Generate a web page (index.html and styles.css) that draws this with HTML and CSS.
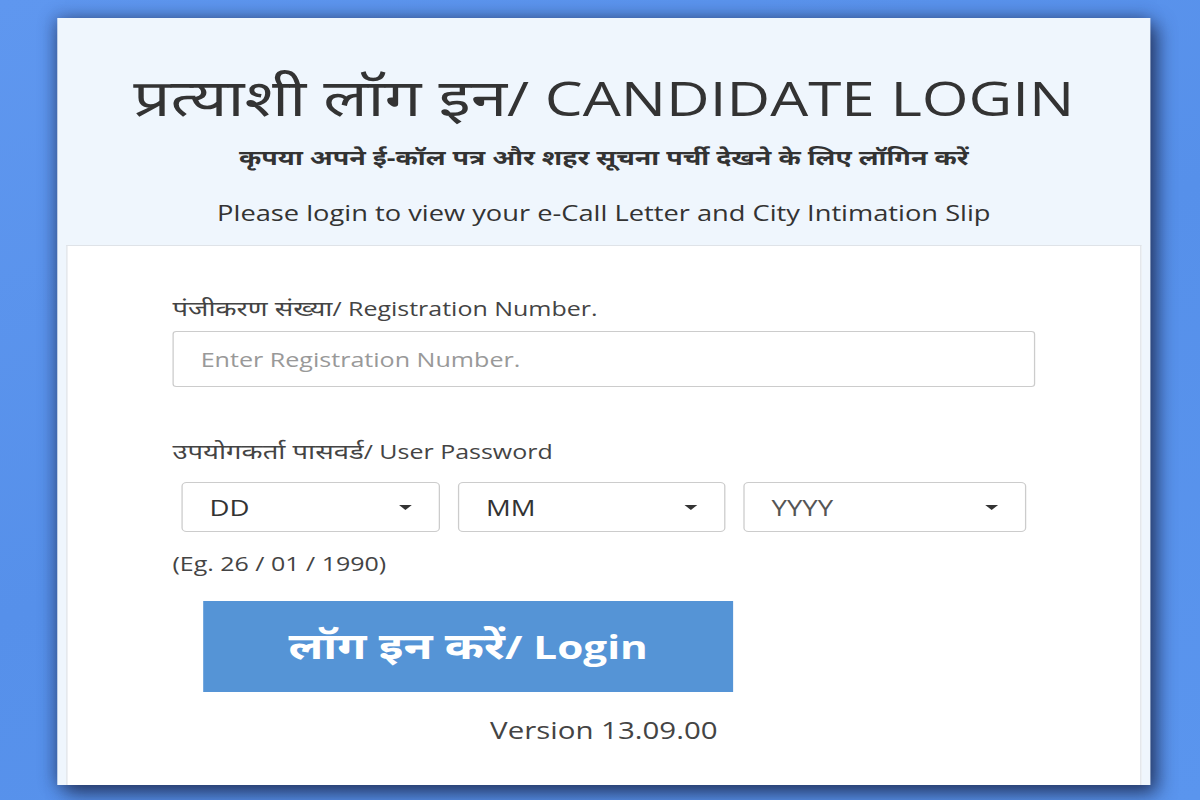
FILE: index.html
```html
<!DOCTYPE html>
<html lang="hi">
<head>
<meta charset="utf-8">
<title>Candidate Login</title>
<link rel="stylesheet" href="styles.css">
</head>
<body>
<div class="stage">
  <div class="card">
    <div class="header">
      <h1 class="title"><span class="hi">प्रत्याशी लॉग इन</span>/ CANDIDATE LOGIN</h1>
      <p class="sub-hi">कृपया अपने ई-कॉल पत्र और शहर सूचना पर्ची देखने के लिए लॉगिन करें</p>
      <p class="sub-en">Please login to view your e-Call Letter and City Intimation Slip</p>
    </div>
    <div class="panel">
      <label class="label" for="reg"><span class="hi-s">पंजीकरण संख्या</span>/ Registration Number.</label>
      <input id="reg" class="input" type="text" placeholder="Enter Registration Number.">
      <div class="label label-pw"><span class="hi-s">उपयोगकर्ता पासवर्ड</span>/ User Password</div>
      <div class="dob">
        <div class="select"><span>DD</span><span class="caret"></span></div>
        <div class="select"><span>MM</span><span class="caret"></span></div>
        <div class="select"><span class="muted">YYYY</span><span class="caret"></span></div>
      </div>
      <div class="hint">(Eg. 26 / 01 / 1990)</div>
      <button class="btn" type="button"><span class="hi-b">लॉग इन करें</span>/ Login</button>
      <div class="version">Version 13.09.00</div>
    </div>
  </div>
</div>
</body>
</html>
```
FILE: styles.css
```css
html, body {
  margin: 0;
  padding: 0;
  height: 100%;
}
body {
  background: linear-gradient(160deg, #5f97ef 0%, #5690ea 50%, #5a95ee 100%);
  font-family: "Open Sans", "Noto Sans Devanagari", "Noto Sans", sans-serif;
  color: #333;
  overflow: hidden;
}
.stage {
  width: 938px;
  height: 800px;
  margin-left: 131px;
  padding-top: 18px;
  padding-left: 6px;
  box-sizing: border-box;
  display: flex;
  justify-content: center;
  transform: scaleX(1.28);
  transform-origin: 50% 0;
}
.card {
  width: 854px;
  flex: none;
  height: 767px;
  background: #eff6fd;
  box-shadow: 6px 8px 16px rgba(25, 35, 70, 0.75), -2px 0 14px rgba(25, 35, 70, 0.45);
  overflow: hidden;
  padding: 0 7px;
  box-sizing: border-box;
  display: flex;
  flex-direction: column;
}
.header {
  padding: 56px 0 18px;
  text-align: center;
  white-space: nowrap;
}
.title {
  margin: 0;
  font-size: 47px;
  line-height: 44px;
  font-weight: 400;
  color: #333;
}
.hi {
  font-size: 1.09em;
}
.sub-hi {
  margin: 24px 0 0;
  font-size: 21px;
  line-height: 26px;
  font-weight: 700;
  color: #333;
}
.sub-en {
  margin: 29px 0 0;
  font-size: 21.3px;
  line-height: 28px;
  font-weight: 400;
  color: #333;
}
.panel {
  flex: 1;
  background: #fff;
  border: 1px solid #dfe3e8;
  border-bottom: none;
  padding: 50px 82px 0;
  display: flex;
  flex-direction: column;
  align-items: flex-start;
}
.label {
  font-size: 19.5px;
  line-height: 24px;
  color: #444;
  white-space: nowrap;
}
.hi-s {
  font-size: 1.1em;
}
.label-pw {
  margin-top: 52px;
}
.input {
  margin-top: 10px;
  width: 100%;
  height: 56px;
  box-sizing: border-box;
  border: 1px solid #ccc;
  border-radius: 3px;
  padding: 0 21px;
  font-family: inherit;
  font-size: 19.6px;
  color: #333;
  outline: none;
}
.input::placeholder {
  color: #999;
}
.dob {
  margin-top: 18px;
  padding-left: 7px;
  display: grid;
  grid-template-columns: 202px 209px 221px;
  column-gap: 14px;
}
.select {
  height: 50px;
  box-sizing: border-box;
  border: 1px solid #ccc;
  border-radius: 4px;
  display: flex;
  align-items: center;
  justify-content: space-between;
  padding: 0 21px 0 21px;
  font-size: 21.5px;
  color: #333;
}
.muted {
  color: #555;
}
.caret {
  width: 0;
  height: 0;
  border-left: 5px solid transparent;
  border-right: 5px solid transparent;
  border-top: 5px solid #333;
}
.hint {
  margin-top: 20px;
  font-size: 19.5px;
  line-height: 24px;
  color: #444;
}
.btn {
  margin: 25px 0 0 24px;
  width: 414px;
  height: 91px;
  border: none;
  background: #5594d6;
  color: #fff;
  font-family: inherit;
  font-size: 33px;
  font-weight: 700;
  white-space: nowrap;
  cursor: pointer;
}
.hi-b {
  font-size: 1.12em;
}
.version {
  margin-top: 24px;
  align-self: center;
  font-size: 23px;
  line-height: 28px;
  color: #444;
}
```
